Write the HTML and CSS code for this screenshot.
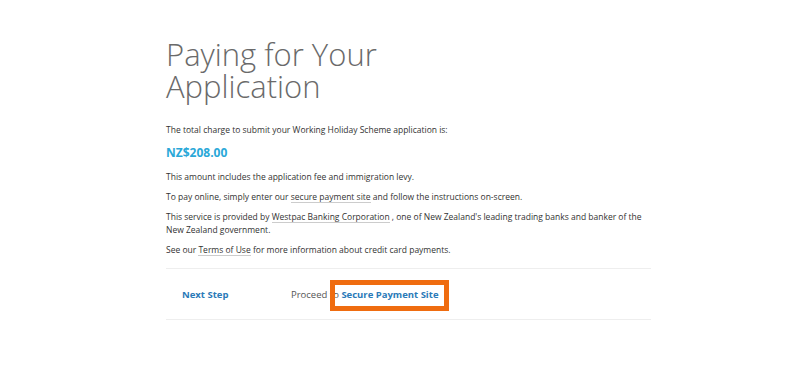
FILE: index.html
```html
<html>
    <head>
        <link rel="stylesheet" href="styles.css">
    </head>
    <body>
        <div class="page">
            <h1 class="title">Paying for Your Application</h1>
            <p class="text">The total charge to submit your Working Holiday Scheme application is:</p>
            <p class="amount">NZ$208.00</p>
            <p class="text">This amount includes the application fee and immigration levy.</p>
            <p class="text">To pay online, simply enter our <a class="link" href="#">secure payment site</a> and follow the instructions on-screen.</p>
            <p class="text">This service is provided by <a class="link" href="#">Westpac Banking Corporation</a> , one of New Zealand's leading trading banks and banker of the New Zealand government.</p>
            <p class="text">See our <a class="link" href="#">Terms of Use</a> for more information about credit card payments.</p>
            <div class="next">
                <span class="next-label">Next Step</span>
                <span class="next-text">Proceed to <a class="next-link" href="#">Secure Payment Site</a></span>
                <div class="highlight"></div>
            </div>
        </div>
    </body>
</html>
```

FILE: styles.css
```css
body {
    margin: 0;
    background-color: #fff;
}
* {
    box-sizing: border-box;
    font-family: 'Open Sans', sans-serif;
}
.page {
    width: 485px;
    margin-left: 166px;
    padding-top: 38px;
}
.title {
    width: 260px;
    margin: 0 0 21px 0;
    font-size: 31px;
    line-height: 32px;
    font-weight: 300;
    color: #6a6a6a;
}
.text {
    margin: 0 0 7px 0;
    font-size: 8.5px;
    line-height: 13px;
    color: #333;
}
.amount {
    margin: 8px 0 9px 0;
    font-size: 12px;
    font-weight: 700;
    color: #2aa8d8;
}
.link {
    color: #333;
    text-decoration: none;
    border-bottom: 1px solid #ccc;
}
.next {
    position: relative;
    display: flex;
    align-items: center;
    margin-top: 12px;
    height: 52px;
    border-top: 1px solid #eee;
    border-bottom: 1px solid #eee;
    font-size: 9.5px;
}
.next-label {
    width: 125px;
    padding-left: 16px;
    font-weight: 700;
    color: #2a7ab8;
}
.next-text {
    color: #555;
}
.next-link {
    font-weight: 700;
    color: #2a7ab8;
    text-decoration: none;
}
.highlight {
    position: absolute;
    left: 164px;
    top: 11px;
    width: 119px;
    height: 31px;
    border: 5px solid #ef6c10;
}
```
